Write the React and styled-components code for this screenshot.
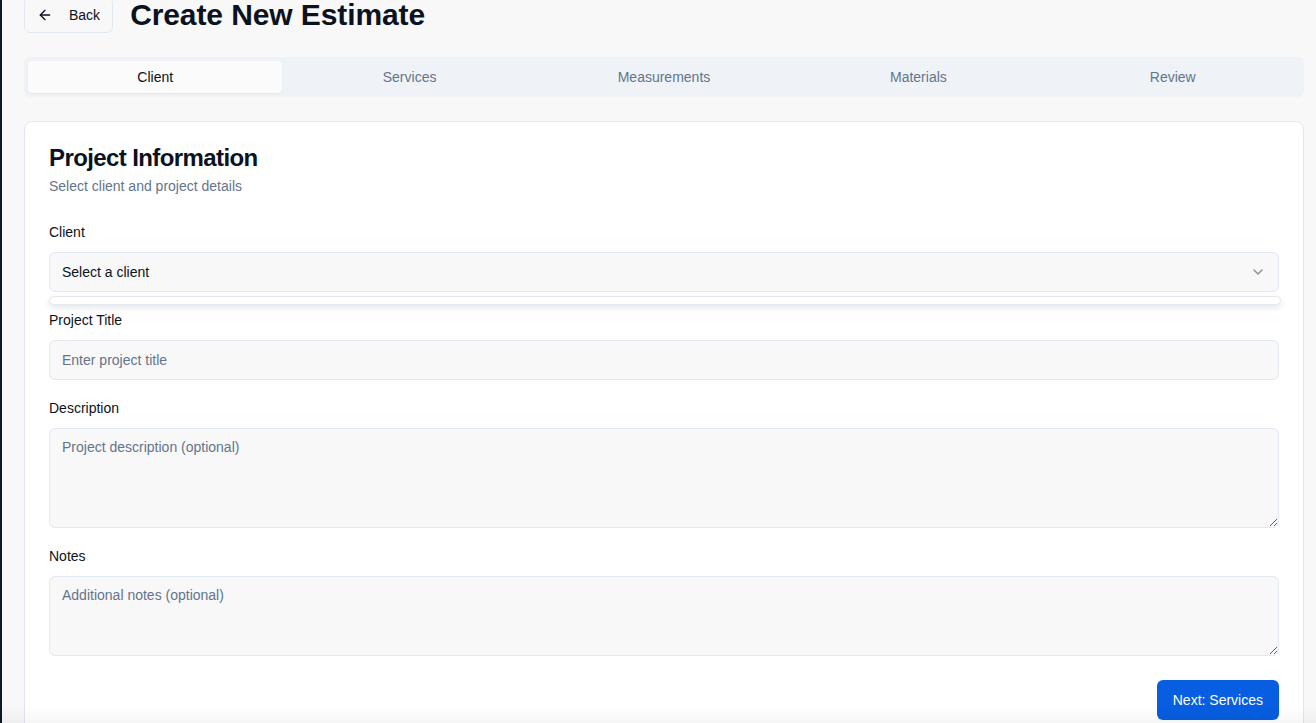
import React from 'react';
import styled, { createGlobalStyle } from 'styled-components';

const GlobalStyle = createGlobalStyle`
  * { box-sizing: border-box; }
  html, body { margin: 0; height: 100%; overflow: hidden; }
  body {
    background: #f8f8f8;
    color: #0b1220;
    font-family: "Liberation Sans", Arial, sans-serif;
  }
`;

const steps = ['Client', 'Services', 'Measurements', 'Materials', 'Review'];

function ArrowLeft() {
  return (
    <svg width="16" height="16" viewBox="0 0 24 24" fill="none" stroke="currentColor" strokeWidth="2" strokeLinecap="round" strokeLinejoin="round">
      <path d="m12 19-7-7 7-7" />
      <path d="M19 12H5" />
    </svg>
  );
}

function ChevronDown() {
  return (
    <svg width="16" height="16" viewBox="0 0 24 24" fill="none" stroke="currentColor" strokeWidth="2" strokeLinecap="round" strokeLinejoin="round">
      <path d="m6 9 6 6 6-6" />
    </svg>
  );
}

export default function App() {
  return (
    <>
      <GlobalStyle />
      <Shell>
        <SideEdge />
        <Main>
          <Header>
            <BackButton type="button">
              <ArrowLeft />
              Back
            </BackButton>
            <PageTitle>Create New Estimate</PageTitle>
          </Header>

          <TabList>
            {steps.map((s, i) => (
              <Tab key={s} $active={i === 0}>{s}</Tab>
            ))}
          </TabList>

          <Card>
            <CardHead>
              <CardTitle>Project Information</CardTitle>
              <CardSub>Select client and project details</CardSub>
            </CardHead>

            <Form>
              <Field>
                <Label>Client</Label>
                <SelectWrap>
                  <SelectBox>
                    <span>Select a client</span>
                    <ChevronDown />
                  </SelectBox>
                  <Popover />
                </SelectWrap>
              </Field>

              <Field>
                <Label>Project Title</Label>
                <Input placeholder="Enter project title" />
              </Field>

              <Field>
                <Label>Description</Label>
                <TextArea $h={100} placeholder="Project description (optional)" />
              </Field>

              <Field>
                <Label>Notes</Label>
                <TextArea $h={80} placeholder="Additional notes (optional)" />
              </Field>
            </Form>

            <Actions>
              <PrimaryButton type="button">Next: Services</PrimaryButton>
            </Actions>
          </Card>
        </Main>
      </Shell>
      <BottomFade />
    </>
  );
}

const Shell = styled.div`
  display: flex;
  min-height: 100vh;
`;

const SideEdge = styled.div`
  width: 2px;
  flex-shrink: 0;
  background: #111827;
`;

const Main = styled.main`
  flex: 1;
  padding: 0 12px 0 22px;
`;

const Header = styled.div`
  display: flex;
  align-items: center;
  gap: 17px;
  height: 36px;
  margin-top: -3px;
  margin-bottom: 24px;
`;

const BackButton = styled.button`
  display: flex;
  align-items: center;
  gap: 16px;
  height: 36px;
  padding: 0 12px;
  background: #f8f8f8;
  border: 1px solid #e2e8f0;
  border-radius: 6px;
  font-family: inherit;
  font-size: 14px;
  color: #0b1220;
  cursor: pointer;
`;

const PageTitle = styled.h1`
  margin: 0;
  font-size: 30px;
  font-weight: 700;
  letter-spacing: -0.1px;
  color: #0b1220;
`;

const TabList = styled.div`
  display: grid;
  grid-template-columns: repeat(5, 1fr);
  height: 40px;
  padding: 4px;
  background: #eff3f8;
  border-radius: 6px;
`;

const Tab = styled.div`
  display: flex;
  align-items: center;
  justify-content: center;
  font-size: 14px;
  border-radius: 4px;
  color: ${(p) => (p.$active ? '#0b1220' : '#64748b')};
  background: ${(p) => (p.$active ? '#fbfbfb' : 'transparent')};
  box-shadow: ${(p) => (p.$active ? '0 1px 2px rgba(0,0,0,0.05)' : 'none')};
`;

const Card = styled.section`
  margin-top: 24px;
  background: #fff;
  border: 1px solid #e2e8f0;
  border-radius: 8px;
  padding: 24px 24px 24px;
`;

const CardHead = styled.div`
  display: flex;
  flex-direction: column;
  gap: 6px;
  margin-bottom: 26px;
`;

const CardTitle = styled.h2`
  margin: 0;
  font-size: 24px;
  line-height: 24px;
  font-weight: 700;
  letter-spacing: -0.6px;
`;

const CardSub = styled.p`
  margin: 0;
  font-size: 14px;
  line-height: 20px;
  color: #64748b;
`;

const Form = styled.div`
  display: flex;
  flex-direction: column;
  gap: 18px;
`;

const Field = styled.div`
  display: flex;
  flex-direction: column;
  gap: 10px;
`;

const Label = styled.label`
  font-size: 14px;
  line-height: 20px;
  color: #0b1220;
`;

const SelectWrap = styled.div`
  position: relative;
`;

const SelectBox = styled.div`
  display: flex;
  align-items: center;
  justify-content: space-between;
  height: 40px;
  padding: 0 12px;
  background: #f8f8f8;
  border: 1px solid #e2e8f0;
  border-radius: 6px;
  font-size: 14px;
  color: #0b1220;
  svg { color: #6b7280; opacity: 0.8; }
`;

const Popover = styled.div`
  position: absolute;
  left: 0;
  right: -2px;
  top: 44px;
  height: 9px;
  background: #fff;
  border: 1px solid #e2e8f0;
  border-radius: 6px;
  box-shadow: 0 3px 6px rgba(15, 23, 42, 0.1);
`;

const controlBase = `
  width: 100%;
  background: #f8f8f8;
  border: 1px solid #e2e8f0;
  border-radius: 6px;
  padding: 0 12px;
  font-family: "Liberation Sans", Arial, sans-serif;
  font-size: 14px;
  color: #0b1220;
  outline: none;
  &::placeholder { color: #64748b; }
`;

const Input = styled.input`
  ${controlBase}
  height: 40px;
`;

const TextArea = styled.textarea`
  ${controlBase}
  display: block;
  height: ${(p) => p.$h}px;
  padding-top: 8px;
  line-height: 20px;
  resize: vertical;
`;

const Actions = styled.div`
  display: flex;
  justify-content: flex-end;
  margin-top: 24px;
`;

const PrimaryButton = styled.button`
  height: 40px;
  padding: 0 16px;
  background: #075ee0;
  color: #fff;
  border: none;
  border-radius: 6px;
  font-family: inherit;
  font-size: 14px;
  cursor: pointer;
`;

const BottomFade = styled.div`
  position: fixed;
  left: 0;
  right: 0;
  bottom: 0;
  height: 18px;
  pointer-events: none;
  background: linear-gradient(to bottom, rgba(0, 0, 0, 0), rgba(0, 0, 0, 0.035));
`;
